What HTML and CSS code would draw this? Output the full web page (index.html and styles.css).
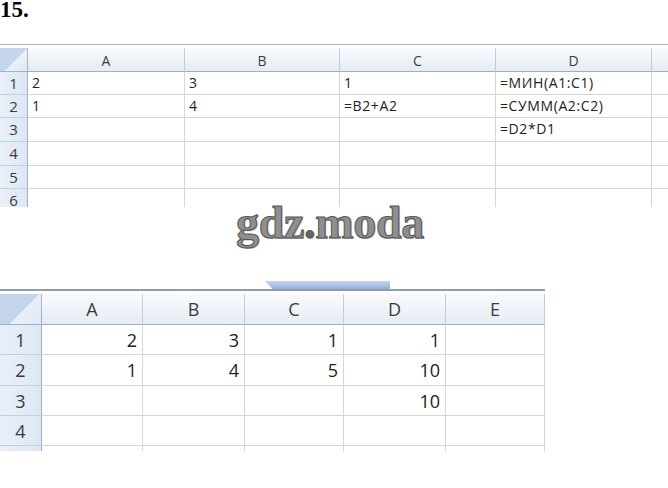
FILE: index.html
```html
<!DOCTYPE html>
<html>
<head>
<meta charset="utf-8">
<link rel="stylesheet" href="styles.css">
</head>
<body>
<div class="page">
  <div class="title">15.</div>
  <div class="sheet1">
    <div class="grid g1">
      <div class="corner"></div><div class="ch">A</div><div class="ch">B</div><div class="ch">C</div><div class="ch">D</div><div class="ch last"></div>
      <div class="rh">1</div><div class="c">2</div><div class="c">3</div><div class="c">1</div><div class="c">=МИН(A1:C1)</div><div class="c last"></div>
      <div class="rh">2</div><div class="c">1</div><div class="c">4</div><div class="c">=B2+A2</div><div class="c">=СУММ(A2:C2)</div><div class="c last"></div>
      <div class="rh">3</div><div class="c"></div><div class="c"></div><div class="c"></div><div class="c">=D2*D1</div><div class="c last"></div>
      <div class="rh">4</div><div class="c"></div><div class="c"></div><div class="c"></div><div class="c"></div><div class="c last"></div>
      <div class="rh">5</div><div class="c"></div><div class="c"></div><div class="c"></div><div class="c"></div><div class="c last"></div>
      <div class="rh nb">6</div><div class="c nb"></div><div class="c nb"></div><div class="c nb"></div><div class="c nb"></div><div class="c last nb"></div>
    </div>
  </div>
  <div class="gap"></div>
  <div class="tabs"><div class="tab"></div></div>
  <div class="sheet2">
    <div class="grid g2">
      <div class="corner"></div><div class="ch">A</div><div class="ch">B</div><div class="ch">C</div><div class="ch">D</div><div class="ch">E</div>
      <div class="rh">1</div><div class="c">2</div><div class="c">3</div><div class="c">1</div><div class="c">1</div><div class="c"></div>
      <div class="rh">2</div><div class="c">1</div><div class="c">4</div><div class="c">5</div><div class="c">10</div><div class="c"></div>
      <div class="rh">3</div><div class="c"></div><div class="c"></div><div class="c"></div><div class="c">10</div><div class="c"></div>
      <div class="rh">4</div><div class="c"></div><div class="c"></div><div class="c"></div><div class="c"></div><div class="c"></div>
      <div class="rh nb"></div><div class="c nb"></div><div class="c nb"></div><div class="c nb"></div><div class="c nb"></div><div class="c nb"></div>
    </div>
  </div>
  <div class="watermark">gdz<span class="dot">.</span>moda</div>
</div>
</body>
</html>
```
FILE: styles.css
```css
html, body {
  margin: 0;
  padding: 0;
  background: #fff;
}
.page {
  position: relative;
  width: 668px;
  height: 488px;
  overflow: hidden;
}
.title {
  height: 44px;
  font-family: "Liberation Serif", serif;
  font-weight: bold;
  font-size: 23px;
  line-height: 20px;
  color: #000;
}
.sheet1 {
  border-top: 1px solid #a7b3c4;
  padding-top: 3px;
}
.grid {
  display: grid;
  font-family: "Open Sans", sans-serif;
  color: #222;
}
.grid > div {
  box-sizing: border-box;
  border-right: 1px solid #d6d6d6;
  border-bottom: 1px solid #d6d6d6;
  white-space: nowrap;
  overflow: hidden;
}
.g1 {
  grid-template-columns: 28px 157px 155px 156px 156px 16px;
  grid-template-rows: 24px 23px 23px 24px 24px 23px 18px;
  font-size: 14px;
}
.g2 {
  width: 545px;
  grid-template-columns: 42px 101px 102px 99px 102px 99px;
  grid-template-rows: 31px 30px 31px 30px 30px 5px;
  font-size: 18px;
}
.grid > .corner {
  background: linear-gradient(135deg, #c3d4ec 0%, #c3d4ec 55%, #e9f0fa 56%, #dfe8f5 100%);
  border-right: 1px solid #9fb3cc;
  border-bottom: 1px solid #9fb3cc;
}
.grid > .ch {
  background: linear-gradient(#f8fafd, #e6ecf4);
  border-right: 1px solid #c2ccd9;
  border-bottom: 1px solid #9fb0c6;
  text-align: center;
  color: #3b3b3b;
}
.grid > .rh {
  background: linear-gradient(90deg, #e9f0f9, #dde7f3);
  border-right: 1px solid #9fb3cc;
  border-bottom: 1px solid #c4d0df;
  text-align: center;
  color: #3b3b3b;
}
.g1 .ch { line-height: 25px; }
.g1 .rh { line-height: 22px; font-size: 15px; }
.g1 .c {
  padding-left: 4px;
  line-height: 22px;
  letter-spacing: 0.6px;
}
.g2 .ch { line-height: 31px; }
.g2 .rh { line-height: 30px; }
.g2 .c {
  text-align: right;
  padding-right: 5px;
  line-height: 30px;
}
.grid > .last { border-right: none; }
.grid > .nb { border-bottom: none; }
.gap { height: 72px; }
.tabs {
  height: 10px;
  display: flex;
  align-items: flex-end;
}
.tab {
  margin-left: 265px;
  width: 125px;
  height: 8px;
  background: linear-gradient(#c3d5ee, #93b1dc);
  clip-path: polygon(0 0, 100% 0, 100% 100%, 6% 100%);
}
.sheet2 {
  width: 545px;
  border-top: 2px solid #8d9cb0;
  padding-top: 3px;
}
.watermark {
  position: absolute;
  left: 236px;
  top: 198px;
  font-family: "Liberation Serif", serif;
  font-weight: bold;
  font-size: 46px;
  line-height: 50px;
  color: #8f8f8f;
  letter-spacing: -0.3px;
  -webkit-text-stroke: 1px #555;
  text-shadow: 1px 1px 0 #bbb;
}
.watermark .dot { color: #666; }
```
